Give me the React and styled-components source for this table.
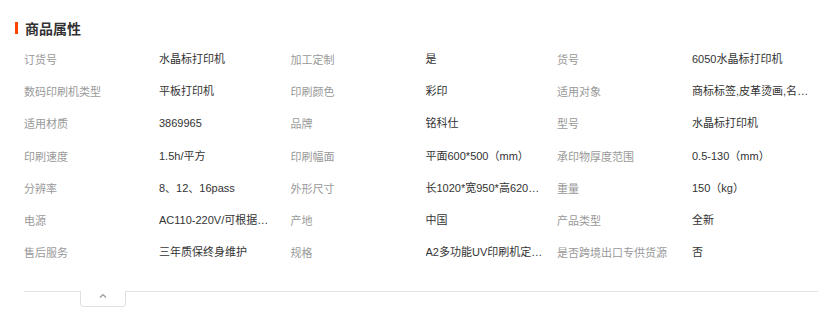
import React from "react";
import styled, { createGlobalStyle } from "styled-components";

const Global = createGlobalStyle`
  html, body {
    margin: 0;
    padding: 0;
    background: #fff;
  }
  body {
    font-family: "Liberation Sans", "Noto Sans CJK SC", sans-serif;
    font-size: 11px;
    color: #333;
  }
`;

const Section = styled.section`
  width: 818px;
  padding-top: 18px;
  overflow: hidden;
`;

const Title = styled.h3`
  display: flex;
  align-items: center;
  margin: 0 0 5px 15px;
  height: 20px;
  font-family: "Noto Sans CJK SC", sans-serif;
  font-size: 14px;
  font-weight: bold;
  color: #333;
  line-height: 20px;
  &::before {
    content: "";
    display: block;
    width: 3px;
    height: 12px;
    background: #ff4400;
    margin-right: 7px;
  }
`;

const Grid = styled.dl`
  display: grid;
  grid-template-columns: repeat(3, 135px 131.5px);
  grid-auto-rows: 32.2px;
  margin: 0 0 0 24px;
  padding: 0;
`;

const Label = styled.dt`
  display: flex;
  align-items: center;
  margin: 0;
  color: #999;
  white-space: nowrap;
`;

const Value = styled.dd`
  margin: 0;
  padding-right: 13px;
  color: #333;
  line-height: 32px;
  white-space: nowrap;
  overflow: hidden;
  text-overflow: ellipsis;
`;

const Footer = styled.div`
  margin: 23px 0 0 24px;
  border-top: 1px solid #e5e5e5;
  height: 20px;
`;

const Toggle = styled.button`
  display: flex;
  align-items: center;
  justify-content: center;
  margin: -1px 0 0 56px;
  width: 46px;
  height: 16px;
  padding: 0 0 6px;
  background: #fff;
  border: 1px solid #e0e0e0;
  border-top: none;
  border-radius: 0 0 4px 4px;
  cursor: pointer;
`;

const rows = [
  [["订货号", "水晶标打印机"], ["加工定制", "是"], ["货号", "6050水晶标打印机"]],
  [["数码印刷机类型", "平板打印机"], ["印刷颜色", "彩印"], ["适用对象", "商标标签,皮革烫画,名片,包装盒"]],
  [["适用材质", "3869965"], ["品牌", "铭科仕"], ["型号", "水晶标打印机"]],
  [["印刷速度", "1.5h/平方"], ["印刷幅面", "平面600*500（mm）"], ["承印物厚度范围", "0.5-130（mm）"]],
  [["分辨率", "8、12、16pass"], ["外形尺寸", "长1020*宽950*高620（mm）"], ["重量", "150（kg）"]],
  [["电源", "AC110-220V/可根据客户要求"], ["产地", "中国"], ["产品类型", "全新"]],
  [["售后服务", "三年质保终身维护"], ["规格", "A2多功能UV印刷机定制款"], ["是否跨境出口专供货源", "否"]],
];

export default function App() {
  return (
    <>
      <Global />
      <Section>
        <Title>商品属性</Title>
        <Grid>
          {rows.flat().map(([k, v]) => (
            <React.Fragment key={k}>
              <Label>{k}</Label>
              <Value>{v}</Value>
            </React.Fragment>
          ))}
        </Grid>
        <Footer>
          <Toggle aria-label="收起">
            <svg width="8" height="5" viewBox="0 0 8 5">
              <polyline points="1,4.5 4,1.5 7,4.5" fill="none" stroke="#999" strokeWidth="1.2" />
            </svg>
          </Toggle>
        </Footer>
      </Section>
    </>
  );
}
